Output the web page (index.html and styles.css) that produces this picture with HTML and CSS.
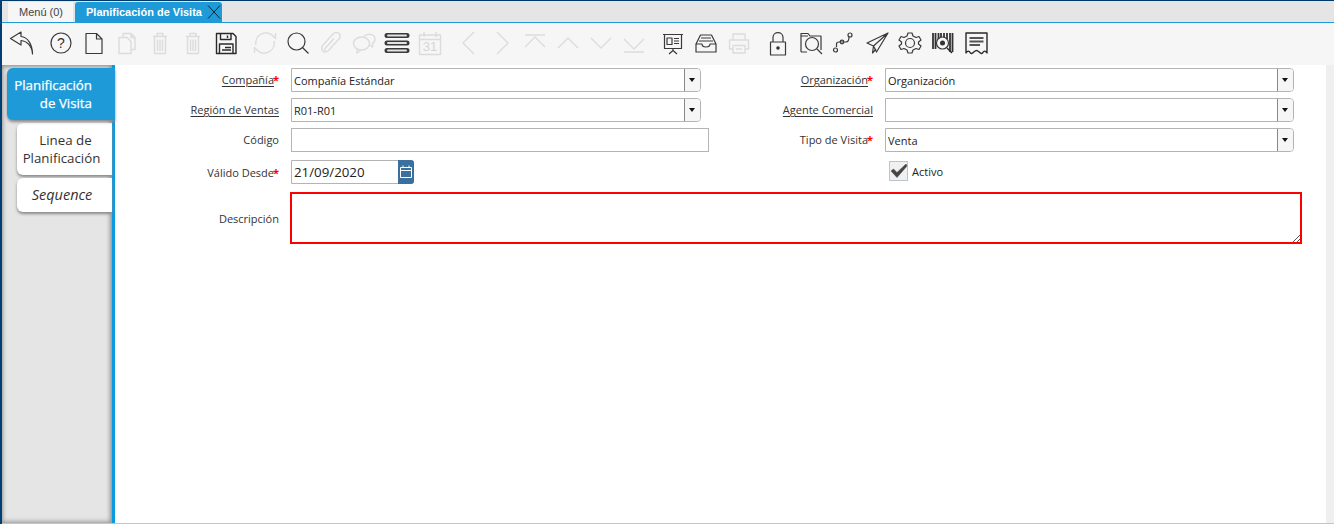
FILE: index.html
```
<!DOCTYPE html>
<html lang="es">
<head>
<meta charset="utf-8">
<title>Planificación de Visita</title>
<link rel="stylesheet" href="styles.css">
</head>
<body>
<div class="app">
  <div class="tabstrip">
    <div class="wintab">Menú (0)</div>
    <div class="wintab active">Planificación de Visita
      <svg class="close" width="14" height="16" viewBox="0 0 14 16"><path d="M1 1.5L13 14.5M13 1.5L1 14.5"/></svg>
    </div>
  </div>
  <div class="toolbar">
    <span class="slot"><svg viewBox="0 0 30 30"><path class="ic" d="M14 4L3.5 10.5L14 17V12.5C20 13 25 18 25.5 26C25.5 17 21 9 14 8.5Z"/></svg></span>
    <span class="slot gap"><svg viewBox="0 0 30 30"><circle class="ic" cx="15" cy="15" r="10"/><text class="glyph" x="15" y="20" text-anchor="middle">?</text></svg></span>
    <span class="slot"><svg viewBox="0 0 30 30"><path class="ic" d="M7 5.5H17.5L23 11V25.5H7ZM17.5 5.5V11H23"/></svg></span>
    <span class="slot"><svg viewBox="0 0 30 30"><path class="off" d="M11 8.5V5.5H19L23 9.5V21.5H19M19 5.5V9.5H23M7 9.5H15L19 13.5V25.5H7Z"/></svg></span>
    <span class="slot"><svg viewBox="0 0 30 30"><path class="off" d="M8 8.5H22M12 8V5.5H18V8M9.5 9V25.5H20.5V9M12.5 11.5V23M15 11.5V23M17.5 11.5V23"/></svg></span>
    <span class="slot"><svg viewBox="0 0 30 30"><path class="off" d="M8 8.5H22M12 8V5.5H18V8M9.5 9V25.5H20.5V9M12.5 11.5V23M15 11.5V23M17.5 11.5V23"/></svg></span>
    <span class="slot"><svg viewBox="0 0 30 30"><path class="ic strong" d="M5.5 5.5H22L25 8.5V25.5H5.5ZM9.5 5.5V11.5H20V5.5M16.5 7.5V10M8.5 25.5V16H22V25.5M14 19.5H20M11 22H20"/></svg></span>
    <span class="slot gap"><svg viewBox="0 0 30 30"><path class="off" d="M6 17A10 10 0 0 1 23 8L25.5 10.5V5M24 13A10 10 0 0 1 7 22L4.5 19.5V25"/></svg></span>
    <span class="slot"><svg viewBox="0 0 30 30"><circle class="ic" cx="13.5" cy="13.5" r="8.5"/><path class="ic" d="M19.5 19.5L25.5 25.5"/></svg></span>
    <span class="slot"><svg viewBox="0 0 30 30"><path class="off" d="M9 25C5 22 5 19 7 17L17 6C20 3 25 5 24 9C24 11 22 12 21 13L12 23C10 24.5 8 23 9 20.5L18 10.5"/></svg></span>
    <span class="slot"><svg viewBox="0 0 30 30"><ellipse class="off" cx="12.5" cy="15.5" rx="8" ry="6.5"/><path class="off" d="M8 21V25L12 22M15 8.5C17 5.5 26 5 26 11C26 13.5 24.5 15 23.5 15.5V19L20 17"/></svg></span>
    <span class="slot"><svg viewBox="0 0 30 30"><path class="ic bars" d="M5 7.5H25M5 15H25M5 22.5H25"/><path class="hole" d="M6 7.5H24M6 15H24M6 22.5H24"/></svg></span>
    <span class="slot"><svg viewBox="0 0 30 30"><path class="off" d="M4.5 7H25.5V26.500H4.500ZM4.500 11.500H25.500M9 4V9M21 4V9"/><text class="glyph dim" x="15" y="23" text-anchor="middle">31</text></svg></span>
    <span class="slot gap"><svg viewBox="0 0 30 30"><path class="off" d="M20 4L9 15L20 26"/></svg></span>
    <span class="slot"><svg viewBox="0 0 30 30"><path class="off" d="M10 4L21 15L10 26"/></svg></span>
    <span class="slot"><svg viewBox="0 0 30 30"><path class="off" d="M5 7H25M5 19L15 9L25 19"/></svg></span>
    <span class="slot"><svg viewBox="0 0 30 30"><path class="off" d="M5 20L15 10L25 20"/></svg></span>
    <span class="slot"><svg viewBox="0 0 30 30"><path class="off" d="M5 10L15 20L25 10"/></svg></span>
    <span class="slot"><svg viewBox="0 0 30 30"><path class="off" d="M5 11L15 21L25 11M5 24H25"/></svg></span>
    <span class="slot gap"><svg viewBox="0 0 30 30"><path class="ic" d="M5 6.500H25M6.500 6.500V20.500H23.500V6.500M15 20.500V23M15 22.500L11 26M15 22.500L19 26M9 10H14V16.500H9ZM16 10.500H21M16 13H21M16 15.500H21"/></svg></span>
    <span class="slot"><svg viewBox="0 0 30 30"><path class="ic" d="M5 16L9.500 7H20.500L25 16V24H5ZM5 16H11C11 20 19 20 19 16H25M8 13H22M10 10H20"/></svg></span>
    <span class="slot"><svg viewBox="0 0 30 30"><path class="off" d="M9 12V6H21V12M9 21H5.500V12H24.500V21H21M9 17.500H21V25H9ZM12 21H18"/></svg></span>
    <span class="slot gap"><svg viewBox="0 0 30 30"><path class="ic" d="M10 14V9.500C10 3 20 3 20 9.500V14M7.500 14H22.500V27H7.500Z"/><circle class="dot" cx="15" cy="20" r="1.800"/></svg></span>
    <span class="slot"><svg viewBox="0 0 30 30"><path class="ic" d="M5 24V5.500H12L14 8H25V22M5 8H12"/><circle class="ic" cx="16" cy="16" r="6.500"/><path class="ic" d="M21 21L26 26M5 24H11"/></svg></span>
    <span class="slot"><svg viewBox="0 0 30 30"><path class="ic" d="M7.500 19V16C7.500 14.500 8.500 14 10 14H17C19 14 20 13 20 9"/><circle class="ic" cx="6.500" cy="22" r="2"/><circle class="ic" cx="13" cy="14" r="1.800"/><circle class="ic" cx="21" cy="7" r="2"/></svg></span>
    <span class="slot"><svg viewBox="0 0 30 30"><path class="ic" d="M26 5L5 15L11.500 18L26 5L14.500 24L11.500 18L10.500 25L14 21"/></svg></span>
    <span class="slot"><svg viewBox="0 0 30 30"><path class="ic" d="M13 5H17L18 8L21 9.500L24 8.500L26 12L23.500 14V16L26 18L24 21.500L21 20.500L18 22L17 25H13L12 22L9 20.500L6 21.500L4 18L6.500 16V14L4 12L6 8.500L9 9.500L12 8Z"/><circle class="ic" cx="15" cy="15" r="4.500"/></svg></span>
    <span class="slot"><svg viewBox="0 0 30 30"><path class="barcode" d="M5 5V21M7.500 5V21M10.500 5V11M13 5V9M16 5V9M19 5V11M22 5V24M24.500 5V24"/><circle class="ic" cx="14.500" cy="15" r="6"/><circle class="dot" cx="14.500" cy="15" r="2.500"/><path class="ic strong" d="M19 20L24 25"/></svg></span>
    <span class="slot"><svg viewBox="0 0 30 30"><path class="ic strong" d="M5 5H26V25C24.500 22.500 23 22.500 21.500 25C20 27 17.500 22.500 15.500 22.500C13.500 22.500 11 27 9.500 25C8 22.500 6.500 22.500 5 25Z"/><path class="rule" d="M8.500 10H22.500M8.500 13.500H22.500M8.500 17H19"/></svg></span>
  </div>
  <div class="main">
    <nav class="side">
      <div class="vtab current">Planificación<br>de Visita</div>
      <div class="vtab two"><span class="nudge">Linea de</span><br>Planificación</div>
      <div class="vtab three"><em>Sequence</em></div>
    </nav>
    <main class="content">
      <form class="form">
        <div class="lbl"><u>Compañía</u><b>*</b></div>
        <div class="combo"><span class="val">Compañía Estándar</span><span class="drop"></span></div>
        <div class="lbl"><u>Organización</u><b>*</b></div>
        <div class="combo right"><span class="val">Organización</span><span class="drop"></span></div>

        <div class="lbl"><u>Región de Ventas</u></div>
        <div class="combo"><span class="val">R01-R01</span><span class="drop"></span></div>
        <div class="lbl"><u>Agente Comercial</u></div>
        <div class="combo right"><span class="val"></span><span class="drop"></span></div>

        <div class="lbl">Código</div>
        <div class="text"></div>
        <div class="lbl">Tipo de Visita<b>*</b></div>
        <div class="combo right"><span class="val">Venta</span><span class="drop"></span></div>

        <div class="lbl low">Válido Desde<b>*</b></div>
        <div class="date"><span class="dval">21/09/2020</span><span class="cal"><svg width="14" height="16" viewBox="0 0 14 16"><path d="M1.500 3.500H12.500V13.500H1.500ZM1.500 6.500H12.500M4 1.500V3.500M10 1.500V3.500"/></svg></span></div>
        <div class="lbl"></div>
        <div class="check"><span class="box"><svg width="20" height="20" viewBox="0 0 20 20"><path d="M2 10L4.500 8L8 11.500L17 3L18 5L8 16.500Z"/></svg></span>Activo</div>

        <div class="lbl desc">Descripción</div>
        <div class="area"><svg class="grip" width="8" height="8" viewBox="0 0 8 8"><path d="M8 1L1 8M8 5L5 8"/></svg></div>
      </form>
    </main>
    <div class="edge"></div>
  </div>
</div>
</body>
</html>
```
FILE: styles.css
```
* { box-sizing: border-box; }
html, body { margin: 0; height: 100%; overflow: hidden; }
body { background: #fff; font-family: "Open Sans", sans-serif; font-size: 11px; color: #333; }
.app { display: flex; flex-direction: column; height: 524px; border-top: 1px solid #003a6b; border-left: 2px solid #003f73; }

.tabstrip { display: flex; height: 22px; padding: 1px 0 0 6px; gap: 2px; background: #e5e5e5; border-bottom: 1px solid #1e9ad9; flex: none; }
.wintab { width: 65px; height: 20px; padding-left: 1px; background: #f6f6f6; font-family: "Liberation Sans", sans-serif; font-size: 11px; line-height: 20px; text-align: center; color: #444; }
.wintab.active { width: 147px; background: #1e9ad9; color: #fff; font-weight: 700; border-radius: 3px 3px 0 0; padding-left: 11px; text-align: left; display: flex; justify-content: space-between; align-items: center; }
.close { stroke: #123; stroke-width: 1; fill: none; margin-right: 1px; }

.toolbar { display: flex; height: 42px; flex: none; padding: 0 0 2px 3px; background: #f6f6f6; align-items: center; }
.slot { width: 33px; height: 30px; display: flex; justify-content: center; flex: none; }
.slot.gap { margin-left: 6px; }
.slot svg { width: 30px; height: 30px; }
.ic { fill: none; stroke: #3a3a3a; stroke-width: 1.2; stroke-linejoin: round; }
.ic.strong { stroke: #2a2a2a; stroke-width: 1.4; }
.ic.bars { stroke-width: 5; stroke-linecap: round; }
.hole { fill: none; stroke: #e2e2e2; stroke-width: 2; stroke-linecap: round; }
.off { fill: none; stroke: #dcdcdc; stroke-width: 1.4; stroke-linejoin: round; }
.dot { fill: #333; }
.barcode { fill: none; stroke: #333; stroke-width: 1.8; }
.rule { fill: none; stroke: #555; stroke-width: 1.8; }
.glyph { font-family: "Liberation Sans", sans-serif; font-size: 14px; fill: #333; }
.glyph.dim { fill: #d4d4d4; font-size: 13px; }

.main { flex: 1; display: flex; min-height: 0; border-bottom: 1px solid #c4c4c4; }
.side { width: 113px; flex: none; padding-top: 3px; background: #e5e5e5; border-right: 3px solid #0a9ae2; box-shadow: inset 0 3px 4px -1px #999, inset -4px 0 4px -2px #999, inset 4px 0 4px -3px #aaa, inset 0 -4px 4px -2px #aaa; display: flex; flex-direction: column; align-items: flex-end; font-size: 13.300px; line-height: 18px; }
.vtab { background: #fff; border-radius: 6px 0 0 6px; box-shadow: 0 2px 3px #888; color: #333; }
.vtab.current { width: 108px; height: 52px; margin-right: -3px; padding: 8px 23px 0 7px; background: #1e9ad9; color: #fff; text-align: right; position: relative; -webkit-text-stroke: .25px #fff; }
.vtab.two { width: 95px; height: 52px; margin-top: 3px; padding-top: 8px; padding-right: 6px; text-align: center; }
.nudge { padding-left: 8px; }
.vtab.three { width: 95px; height: 34px; margin-top: 3px; padding-top: 8px; padding-right: 5px; text-align: center; font-size: 14.500px; }

.content { flex: 1; padding-top: 3px; }
.edge { width: 8px; flex: none; background: #efefef; }
.form { display: grid; grid-template-columns: 176px 418px 176px 417px; grid-template-rows: 24px 24px 24px 26px 54px; row-gap: 6px; }
.lbl { padding-right: 12px; text-align: right; line-height: 24px; white-space: nowrap; }
.lbl.low { line-height: 30px; }
.lbl.desc { line-height: 58px; }
.lbl u { text-underline-offset: 2px; }
.lbl b { color: #f00; font-weight: 700; margin-left: -1px; }
.combo { width: 410px; height: 24px; display: flex; border: 1px solid #b4b4b4; border-radius: 0 4px 4px 0; background: #fff; }
.combo.right { width: 409px; }
.val { flex: 1; padding-left: 2px; line-height: 24px; color: #222; }
.drop { width: 16px; position: relative; background: #f6f6f6; border-left: 1px solid #888; border-radius: 0 3px 3px 0; }
.drop::after { content: ""; position: absolute; left: 4px; top: 9px; border: 3.500px solid transparent; border-top: 4px solid #111; border-bottom: 0; }
.text { width: 418px; height: 24px; border: 1px solid #b4b4b4; background: #fff; }
.date { width: 123px; height: 24px; align-self: end; display: flex; border: 1px solid #b4b4b4; border-radius: 0 3px 3px 0; }
.dval { flex: 1; padding-left: 2px; font-size: 13.300px; line-height: 22px; color: #222; }
.cal { width: 16px; margin: -1px -1px -1px 0; background: #3a6f9e; border-radius: 0 3px 3px 0; display: flex; align-items: center; justify-content: center; }
.cal svg { fill: none; stroke: #fff; stroke-width: 1; }
.check { display: flex; align-items: center; height: 24px; margin-top: 1px; padding-left: 4px; color: #222; }
.box { width: 19px; height: 20px; margin-right: 4px; background: #f0f0f0; border: 1px solid #b8c4d0; position: relative; }
.box svg { position: absolute; left: -1px; top: -1px; fill: #444; stroke: #444; stroke-width: .5; }
.area { grid-column: 2 / 5; height: 52px; align-self: end; margin-left: -1px; border: 2px solid #f00; position: relative; background: #fff; }
.grip { position: absolute; right: 0; bottom: 0; stroke: #555; stroke-width: 1; fill: none; }
```
